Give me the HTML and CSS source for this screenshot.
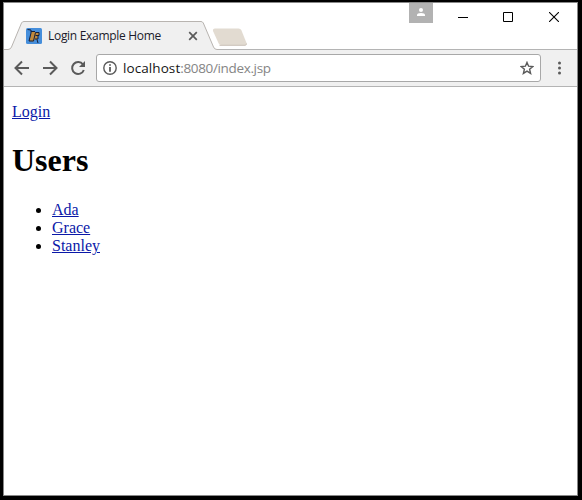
FILE: index.html
```html
<!DOCTYPE html>
<html lang="en">
<head>
<meta charset="utf-8">
<title>Login Example Home</title>
<link rel="stylesheet" href="styles.css">
</head>
<body>
<div class="window">
  <header class="titlebar">
    <div class="tab">
      <svg class="tab-shape" width="215" height="29" viewBox="0 0 215 29"><path d="M0 29V28.500H4Q6.500 28.500 7.500 26L17.500 2Q18.200 .5 20 .5H197Q198.500 .5 199.300 2L209.500 26Q210.500 28.500 213 28.500H215V29Z" fill="#f0f0f0"/><path d="M0 28.500H4Q6.500 28.500 7.500 26L17.500 2Q18.200 .5 20 .5H197Q198.500 .5 199.300 2L209.500 26Q210.500 28.500 213 28.500H215" fill="none" stroke="#b8b4b0"/></svg>
      <svg class="favicon" width="16" height="16" viewBox="0 0 16 16"><rect width="16" height="16" rx="1.500" fill="#458edb"/><path d="M5.500 3.500L13.500 4.500 13 7 11.500 8.500 12 11 8.500 11.500 7.500 13.500 3 13 4.500 9Z" fill="#c18a3b"/><path d="M1.500 1.500L5 2V5L3 13H7.500L9.500 4.500H13V7.500H9.500M12 8V11H9M5 3.500H9M11 11.500L12 15" fill="none" stroke="#14203c" stroke-width="1"/></svg>
      <span class="tab-title">Login Example Home</span>
      <svg class="tab-close" width="10" height="10" viewBox="0 0 10 10"><path d="M1.200 1.200L8.800 8.800M8.800 1.200L1.200 8.800" stroke="#5a5a5a" stroke-width="1.700"/></svg>
    </div>
    <svg class="new-tab" width="37" height="19" viewBox="0 0 37 19"><path d="M3 .5H26.500Q28.500 .5 29.300 2L34.500 15Q35 17 33 17H9.500Q7.500 17 6.700 15.500L1 3Q.5 .5 3 .5Z" fill="#e2dbd1"/><path d="M7.500 17.300H33Q34.500 17.300 34.500 15.500" fill="none" stroke="#c9bfb4"/></svg>
    <div class="controls">
      <svg class="profile" width="24" height="20" viewBox="0 0 24 20"><rect width="24" height="20" fill="#b2b2b2"/><circle cx="12" cy="7" r="2" fill="#fff"/><path d="M8 13V12Q8 10 12 10T16 12V13Z" fill="#fff"/></svg>
      <svg class="glyph" width="10" height="10" viewBox="0 0 10 10"><path d="M0 5.500H10" stroke="#000"/></svg>
      <svg class="glyph" width="10" height="10" viewBox="0 0 10 10"><path d="M.5 .5H9.500V9.500H.5Z" fill="none" stroke="#000"/></svg>
      <svg class="glyph close" width="10" height="10" viewBox="0 0 10 10"><path d="M0 0L10 10M10 0L0 10" stroke="#000" stroke-width="1.100"/></svg>
    </div>
  </header>
  <nav class="toolbar">
    <svg class="nav-icon" width="16" height="16" viewBox="0 0 16 16"><path d="M15 8H2M8 1.500L1.500 8 8 14.500" fill="none" stroke="#5a5a5a" stroke-width="2"/></svg>
    <svg class="nav-icon" width="16" height="16" viewBox="0 0 16 16"><path d="M1 8H14M8 1.500L14.500 8 8 14.500" fill="none" stroke="#5a5a5a" stroke-width="2"/></svg>
    <svg class="nav-icon" width="16" height="16" viewBox="0 0 16 16"><path d="M13 4.500A6 6 0 1 0 13.800 10" fill="none" stroke="#5a5a5a" stroke-width="2"/><path d="M15 1V7H9Z" fill="#5a5a5a"/></svg>
    <div class="address">
      <svg width="14" height="14" viewBox="0 0 14 14"><circle cx="7" cy="7" r="6.200" fill="none" stroke="#5a5a5a" stroke-width="1.400"/><path d="M7 3.200V4.800M7 6V10.700" stroke="#5a5a5a" stroke-width="1.800"/></svg>
      <span class="url"><span class="host">localhost</span>:8080/index.jsp</span>
      <svg width="14" height="14" viewBox="0 0 14 14"><path d="M7 1.400L8.600 5.200 12.800 5.500 9.600 8.200 10.600 12.400 7 10.100 3.400 12.400 4.400 8.200 1.200 5.500 5.400 5.200Z" fill="none" stroke="#5a5a5a" stroke-width="1.400"/></svg>
    </div>
    <svg class="menu" width="4" height="14" viewBox="0 0 4 14"><g fill="#5a5a5a"><circle cx="2.500" cy="2" r="1.500"/><circle cx="2.500" cy="7" r="1.500"/><circle cx="2.500" cy="12" r="1.500"/></g></svg>
  </nav>
  <main class="page">
    <a class="link" href="#">Login</a>
    <h1 class="heading">Users</h1>
    <ul class="users">
      <li><a class="link" href="#">Ada</a></li>
      <li><a class="link" href="#">Grace</a></li>
      <li><a class="link" href="#">Stanley</a></li>
    </ul>
  </main>
</div>
</body>
</html>
```
FILE: styles.css
```css
* { box-sizing: border-box; }
body { margin: 0; height: 500px; padding: 2px 4px 4px 3px; background: #000; overflow: hidden; }
svg { display: block; flex: none; }
.window { height: 494px; border: 1px solid #888; background: #fff; display: flex; flex-direction: column; }
.titlebar { height: 47px; flex: none; display: flex; align-items: flex-end; background: linear-gradient(#b4b4b4, #b4b4b4) bottom / 100% 1px no-repeat; }
.tab { position: relative; width: 215px; height: 29px; display: flex; align-items: center; padding: 0 21px 0 22px; background: #fff; }
.tab-shape { position: absolute; left: 0; top: 0; }
.favicon { position: relative; }
.tab-title { position: relative; flex: 1; margin-left: 6px; font: 12px/16px "Open Sans", sans-serif; letter-spacing: -0.3px; color: #1b1b2b; white-space: nowrap; }
.tab-close { position: relative; }
.new-tab { position: relative; margin: 0 0 3px -7px; }
.controls { flex: 1; align-self: flex-start; display: flex; justify-content: flex-end; padding-right: 18px; }
.profile { margin-right: 25px; }
.glyph { margin: 9px 0 0; }
.glyph + .glyph { margin-left: 35px; }
.glyph + .glyph.close { margin-left: 36px; }
.toolbar { height: 37px; flex: none; display: flex; align-items: center; padding: 0 16px 0 10px; background: #f0f0f0; border-bottom: 1px solid #b4b4b4; }
.nav-icon { margin-right: 12px; }
.address { flex: 1; height: 28px; margin: 0 16px 0 -2px; padding: 0 6px; display: flex; align-items: center; gap: 6px; background: #fff; border: 1px solid #a8a8a8; border-radius: 3px; }
.url { flex: 1; font: 13.5px/20px "Open Sans", sans-serif; letter-spacing: -0.35px; color: #858585; }
.host { letter-spacing: 0.08px; color: #151515; }
.page { padding: 16px 8px; font: 16px/18px "Liberation Serif", serif; color: #000; }
.heading { margin: 21px 0 23px; font-size: 32px; line-height: 36px; }
.users { margin: 0; padding-left: 40px; }
.link { color: #0a18a8; text-decoration: underline; }
```
